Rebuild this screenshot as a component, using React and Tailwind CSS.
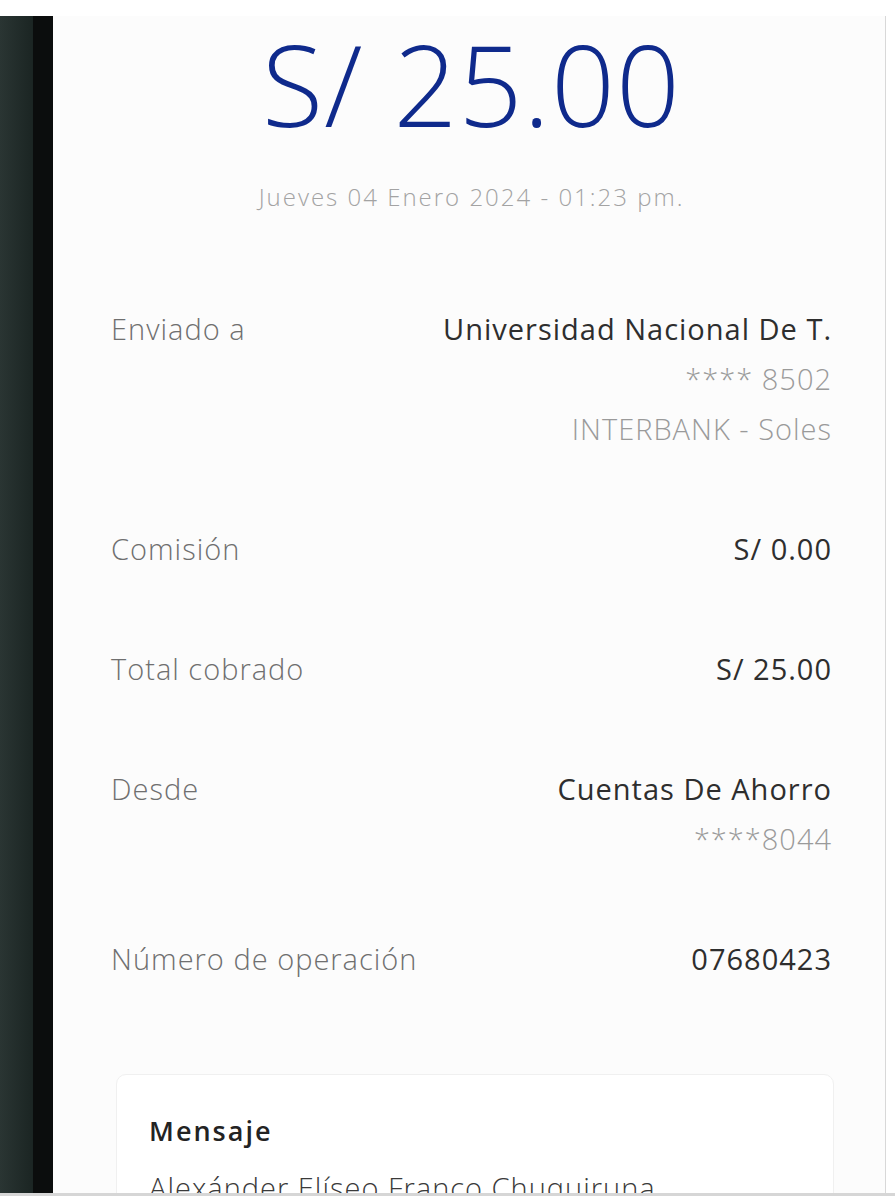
import React from "react";

const rows = [
  { label: "Enviado a", values: [
    { text: "Universidad Nacional De T.", strong: true },
    { text: "**** 8502" },
    { text: "INTERBANK - Soles" },
  ] },
  { label: "Comisión", values: [{ text: "S/ 0.00", strong: true }] },
  { label: "Total cobrado", values: [{ text: "S/ 25.00", strong: true }] },
  { label: "Desde", values: [
    { text: "Cuentas De Ahorro", strong: true },
    { text: "****8044" },
  ] },
  { label: "Número de operación", values: [{ text: "07680423", strong: true }] },
];

const DetailRow = ({ label, values }) => (
  <div className="flex justify-between">
    <span className="text-[29px] leading-[50px] font-light tracking-[1px] text-[#6f6f6f]">{label}</span>
    <div className="flex flex-col items-end">
      {values.map((v) => (
        <span
          key={v.text}
          className={
            v.strong
              ? "text-[29px] leading-[50px] tracking-[1px] text-[#2e2e2e]"
              : "text-[29px] leading-[50px] font-light tracking-[1px] text-[#9a9a9a]"
          }
        >
          {v.text}
        </span>
      ))}
    </div>
  </div>
);

export default function App() {
  return (
    <div
      className="w-[895px] h-[1196px] overflow-hidden bg-white flex flex-col"
      style={{ fontFamily: '"Open Sans", "Noto Sans", sans-serif' }}
    >
      <div className="h-[16px] bg-white shrink-0" />
      <div className="flex flex-1 min-h-0">
        <div className="w-[33px] bg-gradient-to-r from-[#2a3533] to-[#1b2523]" />
        <div className="w-[20px] bg-[#0b0d0d]" />
        <div className="flex-1 bg-[#fcfcfc] border-r border-[#d8d8d8] mr-[9px] flex flex-col pl-[58px] pr-[53px] pt-[8px]">
          <div className="text-center text-[112px] leading-[120px] font-light text-[#0f2a8c] tracking-[1px]">
            S/ 25.00
          </div>
          <div className="text-center text-[24px] font-light tracking-[2px] text-[#a3a3a3] mt-[35px]">
            Jueves 04 Enero 2024 - 01:23 pm.
          </div>
          <div className="flex flex-col gap-[70px] mt-[89px]">
            {rows.map((r) => (
              <DetailRow key={r.label} {...r} />
            ))}
          </div>
          <div className="mt-[90px] ml-[5px] mr-[-2px] rounded-[10px] border border-[#f0f0f0] bg-white px-[32px] pt-[36px]">
            <div className="text-[27px] font-semibold tracking-[2px] text-[#232323]">Mensaje</div>
            <div className="text-[29px] font-light tracking-[1px] text-[#3a3a3a] mt-[14px]">
              Alexánder Elíseo Franco Chuquiruna
            </div>
          </div>
        </div>
      </div>
      <div className="h-[3px] bg-[#d6d6d6] shrink-0" />
    </div>
  );
}
